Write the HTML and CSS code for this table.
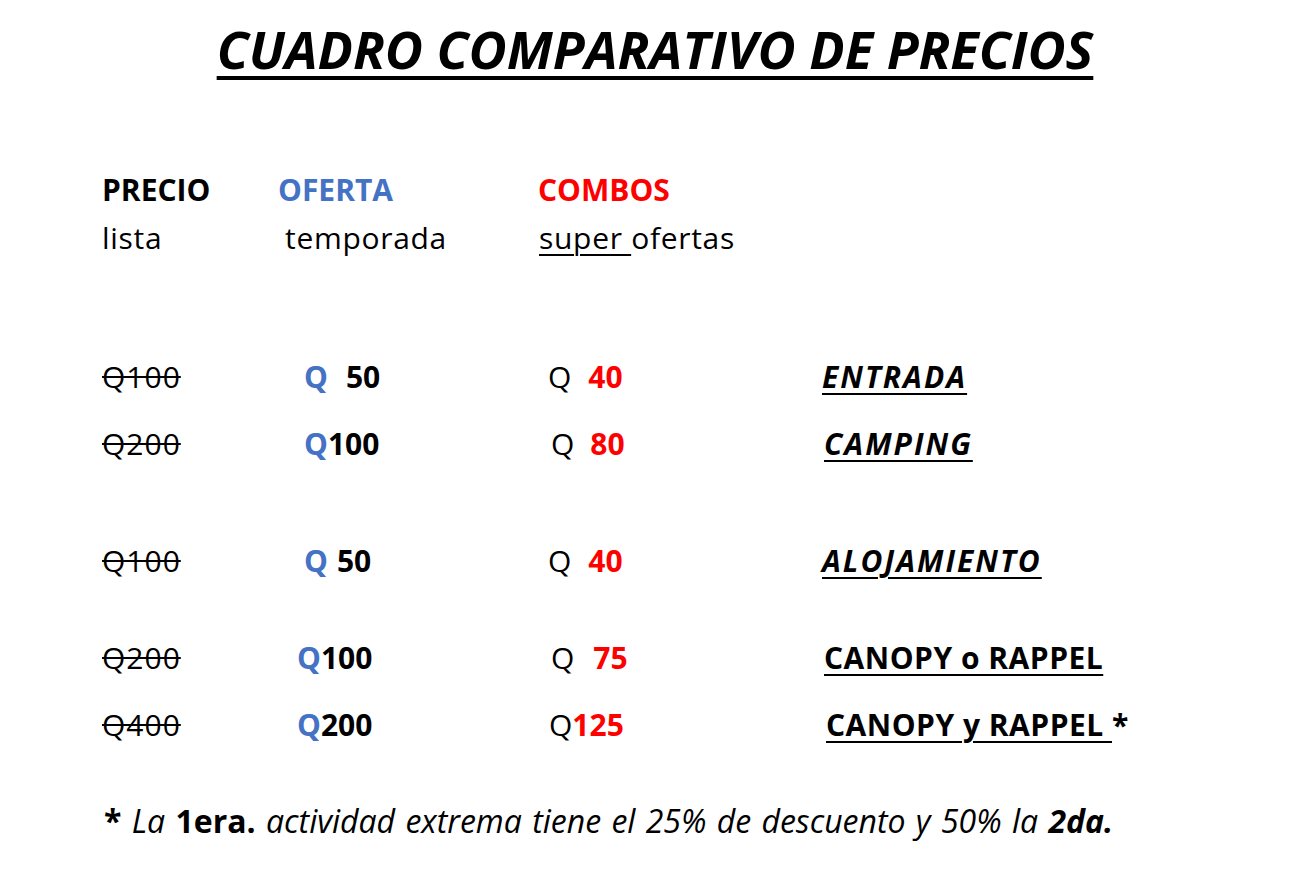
FILE: index.html
```html
<!DOCTYPE html>
<html lang="es">
<head>
<meta charset="utf-8">
<title>Cuadro comparativo de precios</title>
<link rel="stylesheet" href="styles.css">
</head>
<body>
<main class="page">
  <h1 class="title">CUADRO COMPARATIVO DE PRECIOS</h1>

  <div class="head-row row-h1">
    <span class="b">PRECIO</span>
    <span class="b blue">OFERTA</span>
    <span class="b red">COMBOS</span>
  </div>
  <div class="head-row row-h2 reg">
    <span>lista</span>
    <span class="off7">temporada</span>
    <span class="off1"><span class="u">super </span>ofertas</span>
  </div>

  <div class="price-row r1">
    <span class="old">Q100</span>
    <span class="off7 b"><span class="blue">Q</span><span class="g18">50</span></span>
    <span><span>Q</span><span class="g17 b red">40</span></span>
    <span class="label bi u">ENTRADA</span>
  </div>
  <div class="price-row r2">
    <span class="old">Q200</span>
    <span class="off7 b"><span class="blue">Q</span>100</span>
    <span class="off3"><span>Q</span><span class="g16 b red">80</span></span>
    <span class="label off2 bi u">CAMPING</span>
  </div>
  <div class="price-row r3">
    <span class="old">Q100</span>
    <span class="off7 b"><span class="blue">Q</span><span class="g9">50</span></span>
    <span><span>Q</span><span class="g17 b red">40</span></span>
    <span class="label bi u">ALOJAMIENTO</span>
  </div>
  <div class="price-row r4">
    <span class="old">Q200</span>
    <span class="b"><span class="blue">Q</span>100</span>
    <span class="off3"><span>Q</span><span class="g19 b red">75</span></span>
    <span class="label off2 b u wide">CANOPY o RAPPEL</span>
  </div>
  <div class="price-row r5">
    <span class="old">Q400</span>
    <span class="b"><span class="blue">Q</span>200</span>
    <span class="off1"><span>Q</span><span class="b red">125</span></span>
    <span class="label off4 b wide"><span class="u">CANOPY y RAPPEL </span>*</span>
  </div>

  <p class="note"><span class="b">*</span> <span class="i">La</span> <span class="b">1era.</span> <span class="i">actividad extrema tiene el 25% de descuento y 50% la</span> <span class="bi">2da.</span></p>
</main>
</body>
</html>
```

FILE: styles.css
```css
html, body {
  margin: 0;
  padding: 0;
  background: #ffffff;
}

body {
  font-family: "Open Sans", "Liberation Sans", sans-serif;
  font-size: 30px;
  color: #000000;
}

.page {
  width: 1290px;
  height: 872px;
  box-sizing: border-box;
  padding-left: 102px;
  overflow: hidden;
}

.title {
  margin: 0 0 0 -102px;
  padding: 19px 0 0 20px;
  height: 60px;
  line-height: 60px;
  font-size: 52.3px;
  font-weight: 700;
  font-style: italic;
  text-align: center;
  text-decoration: underline;
  text-decoration-thickness: 4px;
  text-underline-offset: 7px;
}

.head-row {
  display: grid;
  grid-template-columns: 176px 260px auto;
  height: 40px;
  line-height: 40px;
  white-space: nowrap;
}

.reg { letter-spacing: 0.7px; }

.row-h1 { margin-top: 91px; }
.row-h2 { margin-top: 8px; }

.price-row {
  display: grid;
  grid-template-columns: 195px 251px 274px auto;
  height: 40px;
  line-height: 40px;
  white-space: nowrap;
}

.r1 { margin-top: 99px; }
.r2 { margin-top: 27px; }
.r3 { margin-top: 77px; }
.r4 { margin-top: 57px; }
.r5 { margin-top: 27px; }

.b { font-weight: 700; }
.i { font-style: italic; }
.bi { font-weight: 700; font-style: italic; }
.u {
  text-decoration: underline;
  text-decoration-thickness: 2px;
  text-underline-offset: 5px;
}
.blue { color: #4472c4; }
.red { color: #ff0000; }

.label.bi { letter-spacing: 2px; }
.label.wide { letter-spacing: 0.5px; }

.old {
  letter-spacing: 1px;
  text-decoration: line-through;
  text-decoration-thickness: 2px;
}

.off1 { padding-left: 1px; }
.off2 { padding-left: 2px; }
.off3 { padding-left: 3px; }
.off4 { padding-left: 4px; }
.off7 { padding-left: 7px; }

.g9 { margin-left: 9px; }
.g16 { margin-left: 16px; }
.g17 { margin-left: 17px; }
.g18 { margin-left: 18px; }
.g19 { margin-left: 19px; }

.note {
  margin: 56px 0 0 2px;
  height: 40px;
  line-height: 40px;
  font-size: 32px;
  word-spacing: 2px;
  white-space: nowrap;
}
```
